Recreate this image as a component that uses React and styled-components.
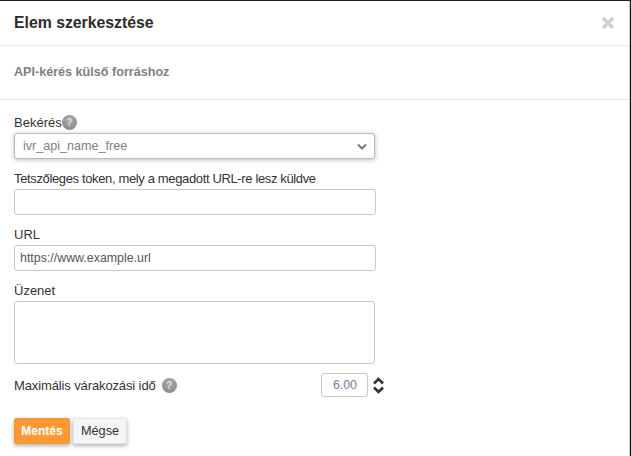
import React from "react";
import styled, { createGlobalStyle } from "styled-components";

const Global = createGlobalStyle`
  html, body { margin: 0; padding: 0; background: #1a1a1a; }
  body { font-family: "Liberation Sans", Arial, sans-serif; overflow: hidden; }
  * { box-sizing: border-box; }
`;
const Page = styled.div`
  width: 631px;
  height: 456px;
  padding: 1px 1px 0 0;
  overflow: hidden;
  background: #1a1a1a;
`;
const Modal = styled.div`
  height: 455px;
  background: #fff;
  border-right: 1px solid #c4c4c4;
`;
const Header = styled.header`
  height: 45px;
  padding: 0 14px;
  display: flex;
  align-items: center;
  justify-content: space-between;
  border-bottom: 1px solid #e9e9e9;
`;
const Title = styled.h3`
  margin: 0;
  font-size: 15.8px;
  font-weight: bold;
  color: #2b2b2b;
`;
const Close = styled.svg`
  width: 14px;
  height: 14px;
  display: block;
`;
const SubHeader = styled.div`
  height: 54px;
  padding: 18px 14px 0;
  border-bottom: 1px solid #e9e9e9;
  font-size: 12.6px;
  font-weight: bold;
  line-height: 16px;
  color: #808080;
`;
const Form = styled.form`
  padding: 13px 14px 0;
  display: flex;
  flex-direction: column;
`;
const Label = styled.label`
  display: flex;
  align-items: center;
  height: 20px;
  padding-bottom: 2px;
  font-size: 13px;
  letter-spacing: ${(p) => p.$spacing || 0}px;
  color: #333;
`;
const WaitLabel = styled(Label)`
  gap: 6px;
  padding-bottom: 0;
  letter-spacing: -0.12px;
`;
const Help = styled.span`
  width: 15px;
  height: 15px;
  border-radius: 50%;
  background: radial-gradient(circle at 50% 35%, #adadad, #808080);
  color: #ddd;
  font-size: 10px;
  font-weight: bold;
  letter-spacing: 0;
  display: flex;
  align-items: center;
  justify-content: center;
`;
const fieldStyle = `
  display: block;
  height: 26px;
  border: 1px solid #c8c8c8;
  border-radius: 3px;
  background: #fff;
  font-family: "Liberation Sans", Arial, sans-serif;
  font-size: 12.4px;
  color: #555;
  outline: none;
`;
const SelectBox = styled.div`
  ${fieldStyle}
  width: 361px;
  margin-bottom: 10px;
  padding: 0 8px;
  display: flex;
  align-items: center;
  justify-content: space-between;
  font-size: 12.6px;
  color: #808080;
  border-color: #bbb;
  box-shadow: 0 1px 5px rgba(0, 0, 0, 0.25);
`;
const Chevron = styled.svg`
  width: 10px;
  height: 7px;
  margin-right: -1px;
`;
const Input = styled.input`
  ${fieldStyle}
  width: 362px;
  margin-bottom: 10px;
  padding: 0 5px;
`;
const TextArea = styled.textarea`
  ${fieldStyle}
  width: 361px;
  height: 63px;
  margin-bottom: 9px;
  padding: 5px;
  resize: none;
`;
const WaitRow = styled.div`
  width: 371px;
  display: flex;
  align-items: center;
  justify-content: space-between;
`;
const NumberGroup = styled.div`
  display: flex;
  align-items: center;
  gap: 4px;
`;
const NumberInput = styled.input`
  ${fieldStyle}
  width: 47px;
  height: 24px;
  padding: 0 10px 0 0;
  text-align: right;
  color: #6a7f99;
`;
const Spinner = styled.svg`
  width: 13px;
  height: 19px;
  display: block;
`;
const Buttons = styled.div`
  margin-top: 21px;
  display: flex;
  gap: 3px;
`;
const Button = styled.button`
  height: 26px;
  width: ${(p) => (p.$primary ? 56 : 54)}px;
  padding: 0;
  border: 1px solid ${(p) => (p.$primary ? "#f7962e" : "#e4e4e4")};
  border-radius: 2px;
  background: ${(p) => (p.$primary ? "#fd9835" : "#f5f5f5")};
  color: ${(p) => (p.$primary ? "#fff" : "#333")};
  font-family: "Liberation Sans", Arial, sans-serif;
  font-size: ${(p) => (p.$primary ? 12 : 12.7)}px;
  font-weight: ${(p) => (p.$primary ? "bold" : "normal")};
  box-shadow: 0 2px 4px rgba(0, 0, 0, 0.3);
`;

export default function App() {
  return (
    <Page>
      <Global />
      <Modal>
        <Header>
          <Title>Elem szerkesztése</Title>
          <Close viewBox="0 0 14 14">
            <path d="M2 2 L12 12 M12 2 L2 12" stroke="#cfcfcf" strokeWidth="3.6" />
          </Close>
        </Header>
        <SubHeader>API-kérés külső forráshoz</SubHeader>
        <Form>
          <Label>
            Bekérés<Help>?</Help>
          </Label>
          <SelectBox>
            ivr_api_name_free
            <Chevron viewBox="0 0 10 7">
              <path d="M1 1.5 L5 5.5 L9 1.5" fill="none" stroke="#777" strokeWidth="2" />
            </Chevron>
          </SelectBox>
          <Label $spacing={-0.36}>Tetszőleges token, mely a megadott URL-re lesz küldve</Label>
          <Input />
          <Label>URL</Label>
          <Input defaultValue="https://www.example.url" />
          <Label>Üzenet</Label>
          <TextArea />
          <WaitRow>
            <WaitLabel>
              Maximális várakozási idő <Help>?</Help>
            </WaitLabel>
            <NumberGroup>
              <NumberInput defaultValue="6.00" />
              <Spinner viewBox="0 0 13 19">
                <path d="M2 7.5 L6.5 3 L11 7.5 M2 11.5 L6.5 16 L11 11.5" fill="none" stroke="#333" strokeWidth="2.6" />
              </Spinner>
            </NumberGroup>
          </WaitRow>
          <Buttons>
            <Button type="button" $primary>Mentés</Button>
            <Button type="button">Mégse</Button>
          </Buttons>
        </Form>
      </Modal>
    </Page>
  );
}
